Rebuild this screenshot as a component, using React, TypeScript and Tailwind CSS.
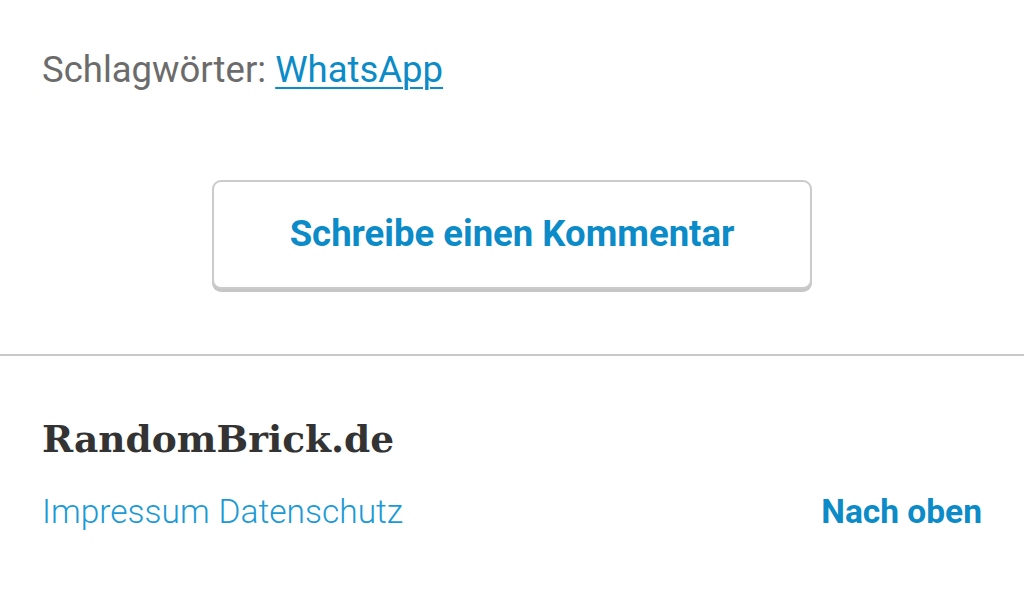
import React from 'react';

const roboto = { fontFamily: 'Roboto, "Liberation Sans", sans-serif' };

export default function App() {
  return (
    <div className="w-[1024px] h-[595px] bg-white overflow-hidden" style={roboto}>
      <div className="px-[42px] pt-[47px]">
        <p className="text-[36.5px] leading-[46px] text-[#6b6b6b]">
          Schlagwörter:{' '}
          <a href="#" className="text-[#0b8bc7] underline decoration-2 underline-offset-[5px]">WhatsApp</a>
        </p>
      </div>

      <div className="flex justify-center pt-[87px] pb-[65px]">
        <button className="w-[600px] h-[109px] rounded-[9px] border-2 border-[#cbcbcb] bg-white shadow-[0_3px_0_#c6c6c6] text-[36.5px] font-bold text-[#0b8bc7]">
          Schreibe einen Kommentar
        </button>
      </div>

      <div className="h-[2px] bg-[#c8c8c8]" />

      <footer className="px-[42px] pt-[59px]">
        <div className="text-[37.5px] leading-[48px] font-bold text-[#333333]" style={{ fontFamily: '"DejaVu Serif", "Liberation Serif", serif' }}>
          RandomBrick.de
        </div>
        <div className="flex items-center justify-between pt-[24px]">
          <div className="flex gap-[9px] text-[33.5px] font-light text-[#1b9ad6]">
            <a href="#">Impressum</a>
            <a href="#">Datenschutz</a>
          </div>
          <a href="#" className="text-[33.5px] font-bold text-[#0b8bc7]">Nach oben</a>
        </div>
      </footer>
    </div>
  );
}
